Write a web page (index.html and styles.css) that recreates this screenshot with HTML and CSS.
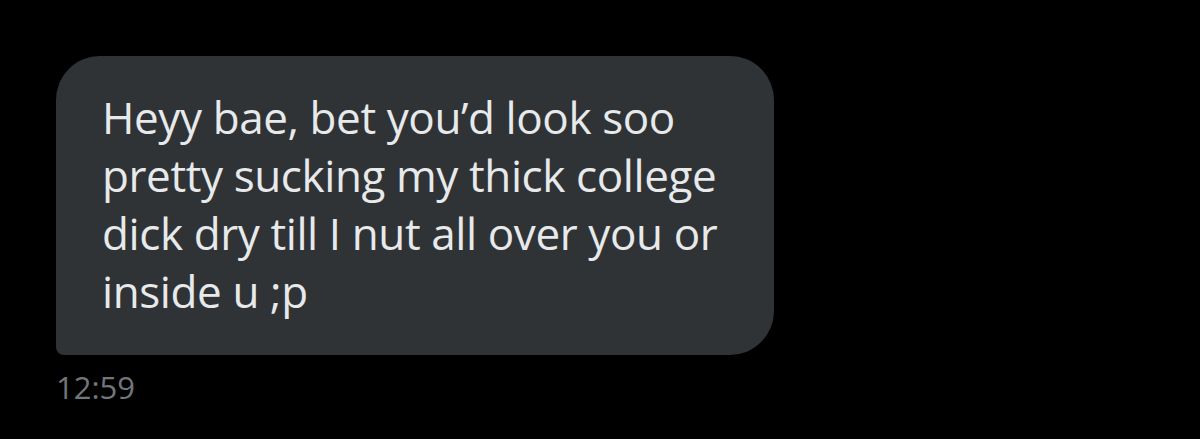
FILE: index.html
```html
<!DOCTYPE html>
<html lang="en">
<head>
<meta charset="utf-8">
<link rel="stylesheet" href="styles.css">
</head>
<body>
<main class="thread">
  <div class="message">
    <div class="bubble">
      <p class="text">Heyy bae, bet you’d look soo pretty sucking my thick college dick dry till I nut all over you or inside u ;p</p>
    </div>
    <div class="time">12:59</div>
  </div>
</main>
</body>
</html>
```
FILE: styles.css
```css
html, body {
  margin: 0;
  padding: 0;
  background: #000;
  height: 100%;
}
.thread {
  padding: 56px 0 0 56px;
  font-family: "Open Sans", "Noto Sans", sans-serif;
}
.message {
  display: flex;
  flex-direction: column;
  align-items: flex-start;
  gap: 14px;
}
.bubble {
  width: 718px;
  height: 299px;
  box-sizing: border-box;
  background: #2f3336;
  border-radius: 44px 44px 44px 8px;
  padding: 32px 40px 0 46px;
}
.text {
  margin: 0;
  color: #e7e9ea;
  font-size: 44px;
  line-height: 58px;
  letter-spacing: -0.4px;
}
.time {
  color: #71767b;
  font-size: 31px;
  line-height: 36px;
}
```
